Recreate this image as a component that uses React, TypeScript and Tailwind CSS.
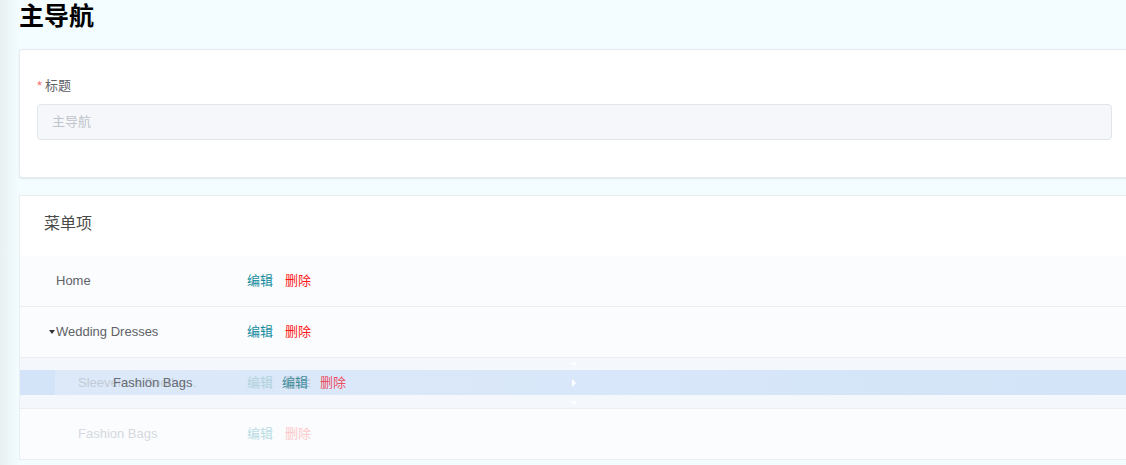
import React from "react";

interface MenuRow {
  label: string;
  depth: number;
  caret?: boolean;
  faded?: boolean;
}

const rows: MenuRow[] = [
  { label: "Home", depth: 0 },
  { label: "Wedding Dresses", depth: 0, caret: true },
];

const font = { fontFamily: '"Liberation Sans", "Noto Sans CJK SC", sans-serif' };

function Actions({ faded }: { faded?: boolean }) {
  return (
    <div className="flex items-center gap-[12px] text-[13px]">
      <span className={faded ? "text-[#b9dde3]" : "text-[#138c9c]"}>编辑</span>
      <span className={faded ? "text-[#fdc9c9]" : "text-[#ff1a1a]"}>删除</span>
    </div>
  );
}

function Row({ row }: { row: MenuRow }) {
  return (
    <div className="flex h-[51px] items-center border-b border-[#eaedf2]">
      <div
        className={
          "flex w-[227px] items-center text-[13px] " +
          (row.depth ? "pl-[58px] " : "pl-[36px] ") +
          (row.faded ? "text-[#d5d9df]" : "text-[#606266]")
        }
      >
        {row.caret && (
          <span className="-ml-[7px] mr-[1px] inline-block h-0 w-0 border-x-[3px] border-t-[4px] border-x-transparent border-t-[#333]" />
        )}
        {row.label}
      </div>
      <Actions faded={row.faded} />
    </div>
  );
}

function Tri({ dir }: { dir: "up" | "down" | "right" }) {
  if (dir === "up")
    return <span className="block h-0 w-0 border-x-[4px] border-b-[4px] border-x-transparent border-b-white/80" />;
  if (dir === "down")
    return <span className="block h-0 w-0 border-x-[4px] border-t-[4px] border-x-transparent border-t-white/80" />;
  return <span className="block h-0 w-0 border-y-[4px] border-l-[4px] border-y-transparent border-l-white" />;
}

export default function App() {
  return (
    <div className="relative h-[465px] w-full overflow-hidden bg-[#f3fcff]" style={font}>
      <div className="absolute left-0 top-0 h-full w-[18px] bg-gradient-to-r from-[#e8f0f2] to-[#f2fbfd]" />
      <div className="relative ml-[19px] w-[1111px]">
        <h1 className="text-[25px] font-bold leading-[32px] text-black">主导航</h1>

        <div className="mt-[17px] rounded-[3px] border border-[#e5eaee] bg-white px-[17px] pb-[37px] pt-[26px] shadow-[0_1px_2px_rgba(0,0,0,0.08)]">
          <div className="flex h-[20px] items-center text-[13px] text-[#606266]">
            <span className="mr-[3px] text-[#f56c6c]">*</span>标题
          </div>
          <div className="mt-[8px] flex h-[36px] items-center rounded-[4px] border border-[#e2e6ec] bg-[#f5f7fa] px-[14px] text-[13px] text-[#c0c4cc]">
            主导航
          </div>
        </div>

        <div className="mt-[17px] border border-b-0 border-[#e9edf0] bg-white">
          <div className="h-[60px] px-[24px] pt-[17px] text-[16px] leading-[22px] text-[#4a4a4a]">菜单项</div>
          <div className="bg-[#fbfcfe]">
            {rows.map((r, i) => (
              <Row key={i} row={r} />
            ))}

            {/* drag row */}
            <div className="relative h-[51px] border-b border-[#eaedf2] bg-[#f4f8fd]">
              <div className="absolute left-0 right-0 top-[12px] h-[25px] bg-[#d3e4f8]" />
              <div className="absolute left-[35px] right-0 top-[12px] h-[25px] bg-gradient-to-r from-[#dde9f9] via-[#d8e7f9] to-[#d3e4f8]" />
              <div className="relative flex h-full items-center">
                <div className="w-[227px] pl-[58px] text-[13px] text-[#c2cbd6]">Sleeveless Sootha...</div>
                <div className="flex items-center gap-[12px] text-[13px]">
                  <span className="text-[#b0d2dc]">编辑</span>
                  <span className="text-[#c6cedc]">删除</span>
                </div>
              </div>
              <div className="absolute left-[35px] right-0 top-[12px] flex h-[25px] items-center">
                <div className="w-[227px] pl-[58px] text-[13px] text-[#686d76]">Fashion Bags</div>
                <div className="flex items-center gap-[12px] text-[13px]">
                  <span className="text-[#3f8e9e]">编辑</span>
                  <span className="text-[#ec4f63]">删除</span>
                </div>
              </div>
              <div className="absolute left-[550px] top-[3px] flex h-[44px] flex-col items-center justify-between">
                <Tri dir="up" />
                <Tri dir="right" />
                <Tri dir="down" />
              </div>
            </div>

            <Row row={{ label: "Fashion Bags", depth: 1, faded: true }} />
          </div>
        </div>
      </div>
    </div>
  );
}
